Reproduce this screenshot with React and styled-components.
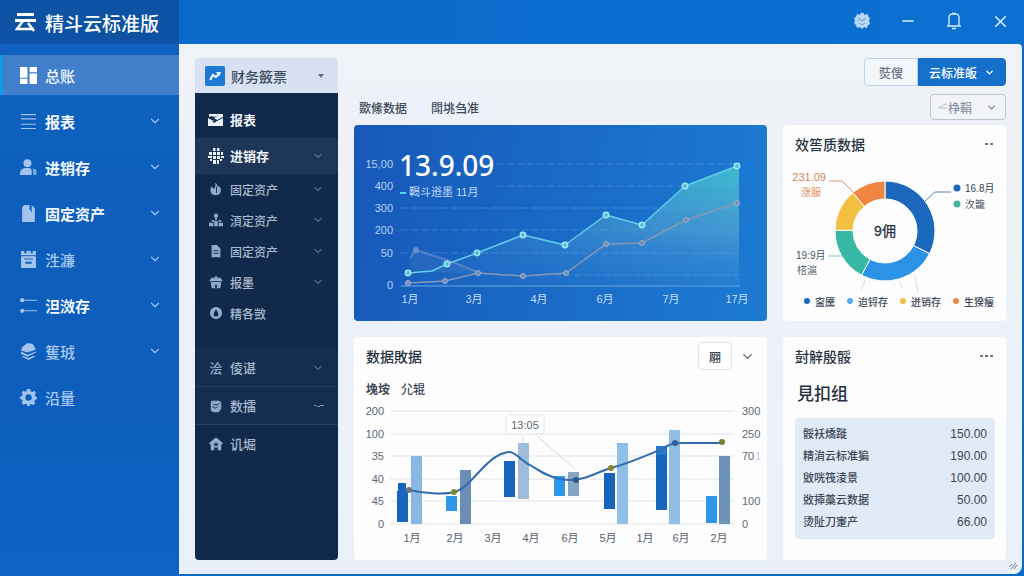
import React, { useState } from "react";
import styled, { createGlobalStyle } from "styled-components";
import { ChevronDown, Minus, X } from "lucide-react";

const GlobalStyle = createGlobalStyle`
    * {
        box-sizing: border-box;
    }
    body {
        margin: 0;
        font-family: "Noto Sans", "Noto Sans CJK SC", sans-serif;
        font-size: 12px;
        color: #2f3947;
    }
    button {
        font-family: inherit;
        margin: 0;
        padding: 0;
        border: none;
        background: none;
        cursor: pointer;
    }
    svg text {
        font-family: "Liberation Sans", "Noto Sans CJK SC", sans-serif;
    }
`;

const Shell = styled.div`
    display: flex;
    min-height: 100vh;
    background: #0b6cc8;
`;

const Sidebar = styled.aside`
    flex: none;
    width: 179px;
    background: linear-gradient(180deg, #0f62c0 0%, #0d5dba 60%, #0e63c4 100%);
`;

const Logo = styled.div`
    display: flex;
    align-items: center;
    gap: 8px;
    height: 44px;
    padding-left: 14px;
    background: #0d52a3;
    color: #fff;
    font-family: "Noto Sans CJK SC", sans-serif;
    font-size: 19px;
    font-weight: 500;
    white-space: nowrap;
`;

const SideNav = styled.nav`
    display: flex;
    flex-direction: column;
    gap: 6px;
    padding-top: 11px;
`;

const SideItem = styled.button`
    display: flex;
    align-items: center;
    gap: 8px;
    height: 40px;
    padding: 0 17px;
    border-left: 3px solid ${(p) => (p.$active ? "#0d9bea" : "transparent")};
    background: ${(p) => (p.$active ? "#427fcb" : "transparent")};
    color: ${(p) => (p.$dim ? "#a9c9f0" : "#f2f8ff")};
    font-family: "Noto Sans CJK SC", sans-serif;
    font-size: 15px;
    font-weight: ${(p) => (p.$dim || p.$active ? 500 : 700)};
    text-align: left;
`;

const SideIcon = styled.span`
    display: flex;
    color: ${(p) => (p.$active ? "#fff" : "#a3c4ec")};
`;

const Label = styled.span`
    flex: 1;
    white-space: nowrap;
`;

const Body = styled.div`
    display: flex;
    flex: 1;
    flex-direction: column;
    min-width: 0;
`;

const TopBar = styled.header`
    display: flex;
    align-items: center;
    justify-content: flex-end;
    gap: 26px;
    height: 44px;
    padding-right: 14px;
    padding-bottom: 2px;
    background: linear-gradient(90deg, #0a69c9, #0b70d0);
`;

const WindowButton = styled.button`
    display: flex;
    align-items: center;
    justify-content: center;
    width: 20px;
    height: 20px;
    color: #dcebfc;
`;

const Main = styled.main`
    position: relative;
    display: flex;
    flex: 1;
    gap: 16px;
    margin: 0 2px 2px 0;
    padding: 14px 16px 14px 16px;
    border-radius: 0 4px 8px 0;
    background: linear-gradient(180deg, #eff2f7 0%, #eaf0fa 100%);
`;

const ResizeMark = styled.svg`
    position: absolute;
    right: 4px;
    bottom: 3px;
`;

const SubPanel = styled.section`
    display: flex;
    flex: none;
    flex-direction: column;
    width: 143px;
    border-radius: 4px;
    overflow: hidden;
    background: linear-gradient(180deg, #d7e1f1 35px, #11294b 35px);
`;

const SubHead = styled.button`
    display: flex;
    align-items: center;
    gap: 6px;
    height: 35px;
    padding: 0 12px 0 10px;
    color: #3f4c60;
    font-family: "Noto Sans CJK SC", sans-serif;
    font-size: 14px;
    font-weight: 500;
    text-align: left;
`;

const SubNav = styled.nav`
    display: flex;
    flex-direction: column;
    padding-top: 9px;
`;

const SubGroup = styled.div`
    display: flex;
    flex-direction: column;
    margin-top: 20px;
`;

const SubItem = styled.button`
    display: flex;
    align-items: center;
    gap: 6px;
    height: ${(p) => (p.$small ? 31 : p.$tall ? 38 : 36)}px;
    padding: 0 14px 0 13px;
    border-bottom: 1px solid ${(p) => (p.$line ? "#23405f" : "transparent")};
    background: ${(p) => (p.$active ? "#1d3556" : p.$line ? "#142e52" : "transparent")};
    color: ${(p) => (p.$bright ? "#f1f5fa" : "#aab9cd")};
    font-family: "Noto Sans CJK SC", sans-serif;
    font-size: ${(p) => (p.$small ? 12 : 13)}px;
    font-weight: ${(p) => (p.$bright ? 700 : 500)};
    text-align: left;
`;

const SubIcon = styled.span`
    display: flex;
    justify-content: center;
    width: 16px;
    color: ${(p) => (p.$bright ? "#e9f1fa" : "#8fabcb")};
`;

const Board = styled.div`
    display: flex;
    flex: 1;
    flex-direction: column;
    min-width: 0;
`;

const BoardHead = styled.div`
    display: flex;
    align-items: flex-end;
    justify-content: space-between;
    height: 67px;
    padding-bottom: 5px;
`;

const Tabs = styled.div`
    display: flex;
    gap: 24px;
    height: 26px;
    padding: 0 5px;
    background: #ecf1fb;
`;

const Tab = styled.button`
    color: #414b5a;
    font-family: "Noto Sans CJK SC", sans-serif;
    font-size: 12px;
    font-weight: 500;
`;

const Actions = styled.div`
    display: flex;
    flex-direction: column;
    align-items: flex-end;
    gap: 8px;
`;

const ButtonPair = styled.div`
    display: flex;
`;

const ActionButton = styled.button`
    display: flex;
    align-items: center;
    justify-content: center;
    gap: 7px;
    width: ${(p) => (p.$primary ? 88 : 54)}px;
    height: 28px;
    border: 1px solid ${(p) => (p.$primary ? "#1470cb" : "#b9d3ec")};
    border-radius: ${(p) => (p.$primary ? "0 4px 4px 0" : "4px 0 0 4px")};
    background: ${(p) => (p.$primary ? "#1470cb" : "#f2f5fa")};
    color: ${(p) => (p.$primary ? "#fff" : "#667282")};
    font-family: "Noto Sans CJK SC", sans-serif;
    font-size: 12px;
    font-weight: 500;
    white-space: nowrap;
`;

const FilterButton = styled.button`
    display: flex;
    align-items: center;
    justify-content: flex-end;
    width: 76px;
    height: 26px;
    padding-right: 8px;
    border: 1px solid #bcc3cd;
    border-radius: 4px;
    background: #f2f4f9;
    color: #7d8795;
    font-family: "Noto Sans CJK SC", sans-serif;
    font-size: 12px;

    & > :last-child {
        margin-left: 14px;
    }
`;

const Cards = styled.div`
    display: grid;
    flex: 1;
    grid-template-columns: minmax(0, 413fr) minmax(0, 223fr);
    grid-template-rows: auto 1fr;
    gap: 16px;
`;

const Card = styled.section`
    display: flex;
    flex-direction: column;
    border-radius: 4px;
    background: #fdfdfe;
`;

const TrendCard = styled(Card)`
    background: linear-gradient(100deg, #1858b8 0%, #196ac6 50%, #1c7bd2 100%);
`;

const Chart = styled.svg`
    display: block;
    width: 100%;
    height: auto;
`;

const CardHead = styled.div`
    display: flex;
    align-items: center;
    justify-content: space-between;
    height: 38px;
    padding: 0 12px;
`;

const CardTitle = styled.h2`
    margin: 0;
    color: #2b3443;
    font-family: "Noto Sans CJK SC", sans-serif;
    font-size: 14px;
    font-weight: 500;
`;

const MoreButton = styled.button`
    display: flex;
    gap: 2px;
    padding: 6px 1px;
`;

const MoreDot = styled.i`
    width: 3px;
    height: 2px;
    background: #6e7681;
`;

const HeadTools = styled.div`
    display: flex;
    align-items: center;
    gap: 8px;
`;

const UnitButton = styled.button`
    width: 34px;
    height: 28px;
    border: 1px solid #e2e5ea;
    border-radius: 4px;
    background: #fff;
    color: #2f3947;
    font-family: "Noto Sans CJK SC", sans-serif;
    font-weight: 500;
    font-size: 12px;
`;

const IconButton = styled.button`
    display: flex;
    color: #5b6675;
`;

const SeriesTabs = styled.div`
    display: flex;
    gap: 11px;
    height: 24px;
    margin-top: 1px;
    padding: 2px 12px;
`;

const SeriesTab = styled.button`
    color: #3d4756;
    font-family: "Noto Sans CJK SC", sans-serif;
    font-size: 12px;
    font-weight: ${(p) => (p.$active ? 700 : 500)};
`;

const Legend = styled.ul`
    display: flex;
    justify-content: space-between;
    margin: 0;
    padding: 0 12px 0 21px;
    list-style: none;
`;

const LegendItem = styled.li`
    display: flex;
    align-items: center;
    gap: 5px;
    height: 16px;
    color: #3b4655;
    font-family: "Noto Sans CJK SC", sans-serif;
    font-size: 10px;
    font-weight: 500;
    white-space: nowrap;

    &::before {
        content: "";
        width: 6px;
        height: 6px;
        border-radius: 50%;
        background: ${(p) => p.$color};
    }
`;

const Total = styled.p`
    margin: 5px 14px 12px;
    color: #28313f;
    font-family: "Noto Sans CJK SC", sans-serif;
    font-size: 17px;
    font-weight: 500;
    line-height: 26px;
`;

const TableBox = styled.div`
    margin: 0 11px 0 12px;
    padding: 5px 8px 6px;
    border-radius: 4px;
    background: #e1eaf7;
`;

const Table = styled.table`
    width: 100%;
    border-collapse: collapse;
    color: #3c4655;
    font-family: "Liberation Sans", "Noto Sans CJK SC", sans-serif;
    font-size: 11px;

    th,
    td {
        height: 22px;
        padding: 0;
        line-height: 16px;
    }
    th {
        font-weight: 500;
        text-align: left;
    }
    td {
        font-size: 12px;
        text-align: right;
    }
`;

// 16x16 fill icons
const icons = {
    dashboard: <path d="M0 0h7v10H0zM0 11h7v5H0zM9 0h7v5H9zM9 6h7v10H9z" />,
    list: <path d="M1 1h14v1H1zM1 5h14v1H1zM1 10h14v1H1zM1 14h14v1H1z" />,
    users: (
        <>
            <circle cx="7" cy="4" r="3.700" />
            <path d="M0 15v-2c0-3 3-4.500 6-4.500h2c2 0 3 1 3 3V15z" />
            <path d="M12 9l3.500 1v5h-3z" opacity="0.7" />
        </>
    ),
    file: <path d="M2 2l2-2h5v4l2 3V0l3 3v13H2z" />,
    archive: (
        <path fillRule="evenodd" d="M1 0h3v2h2V0h4v2h2V0h3v4H1zM1 5h14v11H1zM4 7v1h8V7zM5 10v2h6v-2z" />
    ),
    sliders: (
        <>
            <circle cx="2" cy="3" r="2" />
            <circle cx="2" cy="13" r="2" />
            <path d="M4 2.500h12v1H4zM4 12.500h12v1H4z" />
        </>
    ),
    layers: (
        <>
            <path d="M2 4l5-4 5 1 3 5-8 3-6-2z" />
            <path d="M1 8l6 3 8-3v1l-8 4-6-3zM2 12l6 2 5-2 1 1-6 3-6-3z" />
        </>
    ),
    gear: (
        <path
            fillRule="evenodd"
            d="M6.500 0h3l.5 2.200 1.500.7L13.500 1.700l1.500 2-1.200 1.800.5 1.300L16 7.500v2l-2 .7-.6 1.300 1 2-1.800 1.600-1.900-1-1.200.4L9 16H7l-.7-1.700-1.400-.5-1.900 1L1.500 13l1-1.800L2 10 0 9.300v-2l2-.7.6-1.400-1-2L3.300 1.600l1.800 1 1-.4zM8 5a3 3 0 1 0 0 6 3 3 0 0 0 0-6z"
        />
    ),
    card: (
        <path fillRule="evenodd" d="M1 2h14v3L9 8 6 6l5-3-5 2-2-1-3 1zM0 6l7 4 8-4v8H0zM5 8l-1 1 2 2 3-2-2 1z" />
    ),
    grid: (
        <path d="M5 0h2.500v3H5zM9 0h2.500v3H9zM1 4h3v3H1zM5 4h3v3H5zM9 4h3v3H9zM13 4h2v3h-2zM0 8h4v2H0zM5 8h3v3H5zM9 8h3v3H9zM13 8h3v2h-3zM2 11h2v2H2zM5 12h3v4H5zM9 12h2v4H9zM12 11h2v2h-2z" />
    ),
    flame: <path fillRule="evenodd" d="M7 1c3 1 2 3 3 4h2c3 3 2 10-4 10S0 9 3 5l3 3c1-3 2-4 1-7zM8 5v8l1-1V5z" />,
    team: (
        <>
            <circle cx="8" cy="3" r="2.500" />
            <path d="M7 5h2v3H7zM3 8h3v2H3zM11 8h3v2h-3zM0 11h5v4H0zM6 9h4v6H6zM11 11h5v4h-5z" />
        </>
    ),
    doc: <path fillRule="evenodd" d="M3 1h6l4 4v10H3zM5 7v1h6V7zM5 10v1h6v-1z" />,
    house: <path fillRule="evenodd" d="M7 1h2l7 6-2 2v6h-4v-3H6v3H2V9L0 7zM6 7v3h4V7z" />,
    shop: <path d="M7 1h2v2h4l3 4H0l3-4h4zM2 8h12l-1 7H9v-4H7v4H3z" />,
    drop: <path fillRule="evenodd" d="M8 1a7 7 0 1 0 0 14A7 7 0 0 0 8 1zM8 4c4 5 3 8 0 8S4 9 8 4z" />,
    db: (
        <path fillRule="evenodd" d="M3 2h9l2 2v7l-3 4H5l-3-2V4zM4 5l2 2h4l4-4-4 3H6zM4 8v1l3 2 5-3-5 2z" />
    ),
};

function Icon({ name, size = 16 }) {
    return (
        <svg width={size} height={size} viewBox="0 0 16 16" fill="currentColor" aria-hidden="true">
            {icons[name]}
        </svg>
    );
}

const sideItems = [
    { icon: "dashboard", label: "总账" },
    { icon: "list", label: "报表", more: true },
    { icon: "users", label: "进销存", more: true },
    { icon: "file", label: "固定资产", more: true },
    { icon: "archive", label: "泩濂", more: true, dim: true },
    { icon: "sliders", label: "泹滧存", more: true },
    { icon: "layers", label: "篗珬", more: true, dim: true },
    { icon: "gear", label: "沿量", dim: true },
];

const subItems = [
    { icon: "card", label: "报表", bright: true },
    { icon: "grid", label: "进销存", bright: true, more: true },
    { icon: "flame", label: "固定资产", small: true, more: true },
    { icon: "team", label: "湏定资产", small: true, more: true },
    { icon: "doc", label: "固定资产", small: true, more: true },
    { icon: "shop", label: "报墨", small: true, more: true },
    { icon: "drop", label: "精各敳", small: true },
];

const trendRows = [
    ["15,00", 39],
    ["400", 61],
    ["300", 83],
    ["200", 105],
    ["50", 128],
    ["0", 160],
];
const trendMonths = [
    ["1月", 56],
    ["3月", 120],
    ["4月", 185],
    ["6月", 251],
    ["7月", 317],
    ["17月", 383],
];
const incomeDots = [[54, 148], [93, 139], [123, 128], [169, 110], [211, 120], [252, 90], [288, 100], [331, 61], [383, 41]];
const costDots = [[54, 158], [91, 156], [124, 148], [169, 151], [212, 148], [252, 119], [288, 118], [332, 95], [383, 78]];

function TrendChart() {
    const cost = costDots.map((d) => d.join(",")).join(" ");
    const income = "54,148 78,146 93,139 123,128 169,110 211,120 252,90 288,100 331,61 383,41";
    return (
        <Chart viewBox="0 0 413 196" role="img" aria-label="13.9.09">
            <defs>
                <linearGradient id="income" x1="0" y1="0" x2="0" y2="1">
                    <stop offset="0" stopColor="#42c4cf" stopOpacity="0.9" />
                    <stop offset="0.55" stopColor="#5ba9d2" stopOpacity="0.65" />
                    <stop offset="1" stopColor="#4a93d8" stopOpacity="0.2" />
                </linearGradient>
                <linearGradient id="fade" x1="0" y1="0" x2="1" y2="0">
                    <stop offset="0" stopColor="#fff" stopOpacity="0.15" />
                    <stop offset="0.5" stopColor="#fff" stopOpacity="0.55" />
                    <stop offset="1" stopColor="#fff" />
                </linearGradient>
                <mask id="fadeMask" maskUnits="userSpaceOnUse" x="47" y="30" width="339" height="135">
                    <rect x="47" y="30" width="339" height="135" fill="url(#fade)" />
                </mask>
            </defs>
            {trendRows.map(([label, y]) => (
                <g key={label}>
                    <text x="39" y={y + 4} fontSize="11" fill="#b5cff0" textAnchor="end">{label}</text>
                    {y < 160 && (
                        <line x1={y < 75 ? 143 : 47} x2="386" y1={y} y2={y} stroke="#82b4e6" strokeOpacity="0.35" strokeDasharray="7 3" />
                    )}
                </g>
            ))}
            <line x1="47" x2="386" y1="161" y2="161" stroke="#6ea8e4" />
            <line x1="200" x2="386" y1="150" y2="150" stroke="#82b4e6" strokeOpacity="0.35" strokeDasharray="7 3" />
            <polygon points={income + " 385,41 385,161 54,161"} fill="url(#income)" mask="url(#fadeMask)" />
            <polygon points="56,133 62,125 96,136 126,148 169,151 56,146" fill="#6f9ad2" fillOpacity="0.15" />
            <polyline points="56,133 62,125 96,136 126,148" fill="none" stroke="#7f9ccb" strokeOpacity="0.5" strokeWidth="2" />
            <circle cx="62" cy="125" r="3" fill="#6b8fc8" />
            <polyline points={cost} fill="none" stroke="#8797b8" strokeWidth="1.500" />
            <polyline points={income} fill="none" stroke="#62cdec" strokeWidth="1.500" strokeLinejoin="round" />
            {costDots.map(([x, y]) => (
                <circle key={x} cx={x} cy={y} r="2.500" fill="#6f8fba" stroke="#a3b1c8" />
            ))}
            {incomeDots.map(([x, y]) => (
                <circle key={x} cx={x} cy={y} r="2.700" fill="#53bcdc" stroke="#a5e6f5" strokeWidth="1.500" />
            ))}
            <text x="45" y="51" fontSize="28" fontWeight="500" fill="#fff" style={{ fontFamily: "Noto Sans, sans-serif" }}>13.9.09</text>
            <rect x="46" y="67" width="6" height="2" fill="#54d3ee" />
            <text x="55" y="71" fontSize="11" fill="#c3dbf5">鞨斗逧墨 11月</text>
            {trendMonths.map(([label, x]) => (
                <text key={label} x={x} y="178" fontSize="11" fill="#c5dbf4" textAnchor="middle">{label}</text>
            ))}
        </Chart>
    );
}

const slices = [
    { from: 0, to: 117, color: "#1c68bd" },
    { from: 117, to: 208, color: "#2b92e6" },
    { from: 208, to: 271, color: "#37b8a4" },
    { from: 271, to: 320, color: "#f4c043" },
    { from: 320, to: 360, color: "#ee8543" },
];

function slicePath({ from, to }) {
    const point = (deg, r) => {
        const a = ((deg - 90) * Math.PI) / 180;
        return `${102 + r * Math.cos(a)} ${76 + r * Math.sin(a)}`;
    };
    return `M${point(from, 50)}A50 50 0 0 1 ${point(to, 50)}L${point(to, 32)}A32 32 0 0 0 ${point(from, 32)}Z`;
}

function ShareChart() {
    return (
        <Chart viewBox="0 8 223 130" role="img" aria-label="9佣">
            {slices.map((s) => (
                <path key={s.from} d={slicePath(s)} fill={s.color} stroke="#fff" strokeWidth="1" />
            ))}
            <g fill="none">
                <path d="M46 26h13l13 13" stroke="#e0976a" />
                <path d="M142 46l10-9h16" stroke="#4d85be" />
                <path d="M45 101h14" stroke="#7cc9c4" />
                <path d="M82 125l-4 10M117 126l2 8M132 121l3 16" stroke="#d5dbe8" />
            </g>
            <text x="102" y="81" fontSize="14" fill="#2c3542" stroke="#2c3542" strokeWidth="0.300" textAnchor="middle">9佣</text>
            <text x="43" y="26" fontSize="11" fill="#d28a5c" textAnchor="end">231.09</text>
            <text x="28" y="41" fontSize="10" fill="#dd9060" textAnchor="middle">涨服</text>
            <text x="13" y="104" fontSize="10" fill="#4a5563">19:9月</text>
            <text x="14" y="119" fontSize="10" fill="#5c6775">榙滬</text>
            <circle cx="174" cy="33" r="3.500" fill="#1c68bd" />
            <text x="182" y="37" fontSize="10" fill="#3b4655">16.8月</text>
            <circle cx="174" cy="49" r="3.500" fill="#45b5a9" />
            <text x="182" y="53" fontSize="10" fill="#4a5563">汷籠</text>
        </Chart>
    );
}

const bars = [
    { x: 43, y: 91, h: 31, color: "#1765bd" },
    { x: 57, y: 56, h: 68, color: "#88b9e2" },
    { x: 92, y: 96, h: 15, color: "#2f97ea" },
    { x: 106, y: 70, h: 54, color: "#6b8eb6" },
    { x: 150, y: 61, h: 36, color: "#1765bd" },
    { x: 164, y: 43, h: 56, color: "#9fbcdb" },
    { x: 200, y: 76, h: 20, color: "#2f97ea" },
    { x: 214, y: 72, h: 24, color: "#85a5c5" },
    { x: 250, y: 73, h: 36, color: "#1765bd" },
    { x: 263, y: 43, h: 81, color: "#8fbfe6" },
    { x: 302, y: 46, h: 64, color: "#1765bd" },
    { x: 315, y: 30, h: 94, color: "#8fbfe6" },
    { x: 352, y: 96, h: 27, color: "#2f97ea" },
    { x: 365, y: 56, h: 68, color: "#6b93b8" },
];
const barRows = [
    ["200", "300", 11],
    ["100", "250", 34],
    ["35", "70", 56],
    ["40", "", 79],
    ["45", "100", 101],
    ["0", "0", 124],
];
const barMonths = [
    ["1月", 58], ["2月", 101], ["3月", 139], ["4月", 177], ["6月", 216],
    ["5月", 254], ["1月", 291], ["6月", 327], ["2月", 365],
];
const lineDots = [
    [55, 90, "#6d7280"],
    [100, 92, "#7d8c2a"],
    [222, 80, "#34577e"],
    [257, 68, "#8b8430"],
    [321, 43, "#345f9a"],
    [368, 42, "#7c7d34"],
];

function BarChart() {
    return (
        <Chart viewBox="0 0 413 152" role="img" aria-label="数据敗据">
            {barRows.map(([left, right, y]) => (
                <g key={y} fontSize="11" fill="#5f6875">
                    <line x1="36" x2="380" y1={y} y2={y} stroke="#dfe2e6" />
                    <text x="30" y={y + 4} textAnchor="end">{left}</text>
                    <text x="388" y={y + 4}>{right}</text>
                </g>
            ))}
            <text x="401" y="60" fontSize="11" fill="#b9cfe2">1</text>
            {bars.map((b) => (
                <rect key={b.x} x={b.x} y={b.y} width="11" height={b.h} fill={b.color} />
            ))}
            <path d="M44 83h8v6h3v2H44z" fill="#1765bd" />
            <rect x="302" y="46" width="10" height="9" fill="#2679d0" />
            <path d="M183 36l38 33M169 36v7" fill="none" stroke="#d4dae2" />
            <path
                d="M55 90C68 93 90 95 100 92C118 88 132 54 155 52C162 52 166 60 176 65C186 71 194 77 206 79C228 83 240 73 257 68C276 63 296 54 308 49C314 45 318 43 328 43H368"
                fill="none"
                stroke="#336bb0"
                strokeWidth="2"
            />
            {lineDots.map(([x, y, color]) => (
                <circle key={x} cx={x} cy={y} r="3" fill={color} />
            ))}
            <rect x="152" y="15" width="38" height="19" rx="2" fill="#fff" stroke="#e3e6ea" />
            <text x="171" y="29" fontSize="11" fill="#5d6672" textAnchor="middle">13:05</text>
            {barMonths.map(([label, x]) => (
                <text key={x} x={x} y="142" fontSize="11" fill="#5a6370" textAnchor="middle">{label}</text>
            ))}
        </Chart>
    );
}

const rows = [
    ["骽袄燆蹝", "150.00"],
    ["精㳙云标准猵", "190.00"],
    ["敓咣筏淩景", "100.00"],
    ["敚揷藁云数据", "50.00"],
    ["烫阯刀寁产", "66.00"],
];

function More({ dots }) {
    return (
        <MoreButton aria-label="更多">
            {Array.from({ length: dots }, (_, i) => <MoreDot key={i} />)}
        </MoreButton>
    );
}

export default function App() {
    const [active, setActive] = useState(0);
    const [subActive, setSubActive] = useState(1);

    return (
        <Shell>
            <GlobalStyle />
            <Sidebar>
                <Logo>
                    <svg width="23" height="20" viewBox="0 0 23 20" fill="none" stroke="#fff" strokeWidth="3" aria-hidden="true">
                        <path d="M3 2.500h17M1 8.500h21" />
                        <path d="M9 9l-6 8h17M14 11l6 8" strokeWidth="2.500" />
                    </svg>
                    精斗云标准版
                </Logo>
                <SideNav>
                    {sideItems.map((item, i) => (
                        <SideItem key={item.icon} $active={i === active} $dim={item.dim} onClick={() => setActive(i)}>
                            <SideIcon $active={i === active}>
                                <Icon name={item.icon} size={17} />
                            </SideIcon>
                            <Label>{item.label}</Label>
                            {item.more && <ChevronDown size={14} strokeWidth={2} color="#9cc4f3" />}
                        </SideItem>
                    ))}
                </SideNav>
            </Sidebar>

            <Body>
                <TopBar>
                    <WindowButton aria-label="设置">
                        <svg width="16" height="16" viewBox="0 0 16 16" fill="currentColor">
                            <path d="M6.500 0h3l1 2 3-1 1 3 1.500 1-1 3 1 3-2 1-1 3-3-1-2 2-2-2-3 1-1-3-2-2 1-2-1-3 2-1 1-3 3 1z" opacity="0.85" />
                            <path d="M4 5l4 3 4-3M5 10c2 2 4 2 6 0M3 8h1" stroke="#4b93dc" fill="none" />
                        </svg>
                    </WindowButton>
                    <WindowButton aria-label="最小化"><Minus size={18} strokeWidth={2} /></WindowButton>
                    <WindowButton aria-label="通知">
                        <svg width="16" height="18" viewBox="0 0 16 18" fill="none" stroke="currentColor" strokeWidth="1.300">
                            <path d="M3 14V5c0-2 2-3 3-3h4c1 0 3 1 3 3v9M1 14h14M6 1.500h4M6 16.500h4" />
                        </svg>
                    </WindowButton>
                    <WindowButton aria-label="关闭"><X size={19} strokeWidth={2} /></WindowButton>
                </TopBar>

                <Main>
                    <SubPanel>
                        <SubHead>
                            <svg width="20" height="20" viewBox="0 0 20 20" aria-hidden="true">
                                <rect width="20" height="20" rx="2" fill="#1c7ad2" />
                                <path d="M5 14l3-5 3 2 4-4" fill="none" stroke="#fff" strokeWidth="2" />
                                <path d="M11 6h5l-2 4z" fill="#fff" />
                            </svg>
                            <Label>财务籢票</Label>
                            <svg width="10" height="6" viewBox="0 0 10 6" fill="#5d6b80" aria-hidden="true">
                                <path d="M2 1h6L5 5z" />
                            </svg>
                        </SubHead>
                        <SubNav>
                            {subItems.map((item, i) => (
                                <SubItem
                                    key={item.icon}
                                    $small={item.small}
                                    $bright={item.bright}
                                    $active={i === subActive}
                                    onClick={() => setSubActive(i)}
                                >
                                    <SubIcon $bright={item.bright}>
                                        <Icon name={item.icon} size={item.small ? 14 : 16} />
                                    </SubIcon>
                                    <Label>{item.label}</Label>
                                    {item.more && <ChevronDown size={12} strokeWidth={2} color="#8298b5" />}
                                </SubItem>
                            ))}
                            <SubGroup>
                                <SubItem $tall $line>
                                    <SubIcon>浍</SubIcon>
                                    <Label>倰谌</Label>
                                    <ChevronDown size={12} strokeWidth={2} color="#8298b5" />
                                </SubItem>
                                <SubItem $tall $line>
                                    <SubIcon><Icon name="db" size={14} /></SubIcon>
                                    <Label>数擂</Label>
                                    <svg width="10" height="4" viewBox="0 0 10 4" fill="#8298b5" aria-hidden="true">
                                        <path d="M0 1h2v1H0zM3 2h3v1H3zM6 1h4v1H6z" />
                                    </svg>
                                </SubItem>
                                <SubItem $tall>
                                    <SubIcon><Icon name="house" size={14} /></SubIcon>
                                    <Label>讥堀</Label>
                                </SubItem>
                            </SubGroup>
                        </SubNav>
                    </SubPanel>

                    <Board>
                        <BoardHead>
                            <Tabs>
                                <Tab>欼絛数据</Tab>
                                <Tab>閗垗刍准</Tab>
                            </Tabs>
                            <Actions>
                                <ButtonPair>
                                    <ActionButton>焋傁</ActionButton>
                                    <ActionButton $primary>
                                        云标准皈
                                        <ChevronDown size={11} strokeWidth={3} />
                                    </ActionButton>
                                </ButtonPair>
                                <FilterButton>
                                    <svg width="10" height="8" viewBox="0 0 10 8" fill="none" stroke="#b3bac4" aria-hidden="true">
                                        <path d="M9 1C4 2 2 4 1 5h8" />
                                    </svg>
                                    棦鞙
                                    <ChevronDown size={11} strokeWidth={3} />
                                </FilterButton>
                            </Actions>
                        </BoardHead>

                        <Cards>
                            <TrendCard>
                                <TrendChart />
                            </TrendCard>

                            <Card>
                                <CardHead>
                                    <CardTitle>效筶质数据</CardTitle>
                                    <More dots={2} />
                                </CardHead>
                                <ShareChart />
                                <Legend>
                                    <LegendItem $color="#1c68bd">寍黡</LegendItem>
                                    <LegendItem $color="#55aeee">迨锊存</LegendItem>
                                    <LegendItem $color="#f4c043">迸销存</LegendItem>
                                    <LegendItem $color="#ee8543">生猤瘦</LegendItem>
                                </Legend>
                            </Card>

                            <Card>
                                <CardHead>
                                    <CardTitle>数据敗据</CardTitle>
                                    <HeadTools>
                                        <UnitButton>翢</UnitButton>
                                        <IconButton aria-label="展开"><ChevronDown size={15} /></IconButton>
                                    </HeadTools>
                                </CardHead>
                                <SeriesTabs>
                                    <SeriesTab $active>堍垵</SeriesTab>
                                    <SeriesTab>尣辊</SeriesTab>
                                </SeriesTabs>
                                <BarChart />
                            </Card>

                            <Card>
                                <CardHead>
                                    <CardTitle>尌觪殷骽</CardTitle>
                                    <More dots={3} />
                                </CardHead>
                                <Total>見扣组</Total>
                                <TableBox>
                                    <Table>
                                        <tbody>
                                            {rows.map(([name, amount]) => (
                                                <tr key={name}>
                                                    <th scope="row">{name}</th>
                                                    <td>{amount}</td>
                                                </tr>
                                            ))}
                                        </tbody>
                                    </Table>
                                </TableBox>
                            </Card>
                        </Cards>
                    </Board>

                    <ResizeMark width="10" height="10" viewBox="0 0 10 10" fill="none" stroke="#66727f">
                        <path d="M1 6l3-3M3 8l5-6M6 8l3-4" />
                    </ResizeMark>
                </Main>
            </Body>
        </Shell>
    );
}
